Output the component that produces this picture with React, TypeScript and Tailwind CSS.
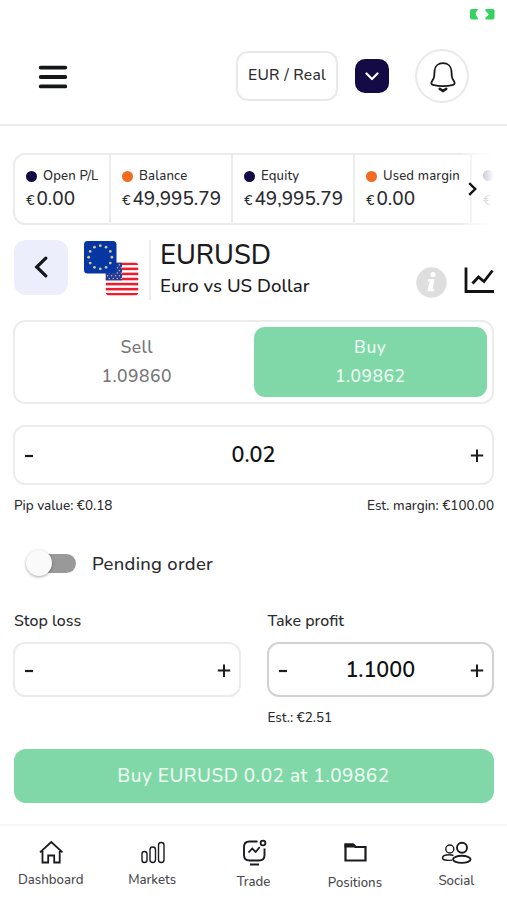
import type { ReactNode } from "react";

const stats = [
  { label: "Open P/L", value: "0.00", dot: "bg-[#140a45]", width: "w-[96px]" },
  { label: "Balance", value: "49,995.79", dot: "bg-[#f26b21]", width: "w-[122px]" },
  { label: "Equity", value: "49,995.79", dot: "bg-[#140a45]", width: "w-[122px]" },
  { label: "Used margin", value: "0.00", dot: "bg-[#f26b21]", width: "w-[117px]" },
];

const euStars = Array.from({ length: 12 }, (_, i) => {
  const a = (i * Math.PI) / 6;
  return { x: 16.25 + Math.sin(a) * 11.6, y: 16.25 - Math.cos(a) * 11.6 };
});

function Flags() {
  return (
    <svg width="55" height="55" viewBox="0 0 55 55" className="mt-px ml-[16px] shrink-0">
      <defs>
        <clipPath id="us">
          <rect x="21.5" y="21.5" width="33" height="33" rx="4" />
        </clipPath>
      </defs>
      <g clipPath="url(#us)">
        <rect x="21.5" y="21.5" width="33" height="33" fill="#fff" />
        {[0, 1, 2, 3, 4, 5, 6].map((i) => (
          <rect key={i} x="21.5" y={21.5 + i * 5.08} width="33" height="2.54" fill="#ee1c2e" />
        ))}
        <rect x="21.5" y="21.5" width="16.5" height="17.8" fill="#273a8f" />
        {[0, 1, 2, 3, 4, 5].map((r) =>
          [0, 1, 2, 3].map((c) => (
            <circle key={`${r}-${c}`} cx={23.5 + c * 4 + (r % 2) * 1.8} cy={24 + r * 2.7} r="0.75" fill="#b4bee8" />
          ))
        )}
      </g>
      <rect width="32.5" height="32.5" rx="3.5" fill="#0636a3" />
      {euStars.map((s, i) => (
        <circle key={i} cx={s.x} cy={s.y} r="1.4" fill="#c9c888" />
      ))}
    </svg>
  );
}

function Stepper({ value, className }: { value?: string; className: string }) {
  return (
    <div className={`flex items-center justify-between rounded-xl border-2 pr-[8px] pl-[10px] ${className}`}>
      <button className="flex w-[14px] justify-start" aria-label="Decrease">
        <svg width="9" height="14" viewBox="0 0 9 14">
          <path d="M0 8H8" stroke="#1c1c20" strokeWidth="2.2" />
        </svg>
      </button>
      <span className="pt-px pr-[2px] text-[21.5px] font-semibold text-[#101012]">{value}</span>
      <button className="flex w-[14px] justify-end" aria-label="Increase">
        <svg width="14" height="14" viewBox="0 0 14 14">
          <path d="M.8 7.600h12.400M7 1.400v12.600" stroke="#1c1c20" strokeWidth="2" />
        </svg>
      </button>
    </div>
  );
}

function NavItem({ label, pad, children }: { label: string; pad: string; children: ReactNode }) {
  return (
    <a className="flex flex-1 flex-col items-center">
      <svg width="32" height="30" viewBox="0 0 32 30" fill="none" stroke="#1b1b1f" strokeWidth="1.8" className="mt-[12px]">
        {children}
      </svg>
      <span className={`text-[13.200px] leading-[18px] font-medium text-[#48484c] ${pad}`}>{label}</span>
    </a>
  );
}

export default function App() {
  return (
    <div className="flex h-[900px] w-[507px] flex-col overflow-hidden bg-white font-['Nunito','Noto_Sans',sans-serif] font-medium text-[#2c2c30]">
      <header className="flex h-[126px] shrink-0 flex-col border-b-2 border-[#ececec]">
        <div className="flex h-[28px] justify-end pt-[9px] pr-[12px]">
          <svg width="25" height="11" viewBox="0 0 25 11" fill="#34d35f">
            <path d="M2 0H8.500L5.500 4 6.500 7 8.500 10.400H2Q0 10.400 0 8.400V2Q0 0 2 0Z" />
            <path d="M15.500 0H22.500Q24.500 0 24.500 2V8.400q0 2-2 2H15.500V8.500L19 5.500 15.500 2Z" />
          </svg>
        </div>
        <div className="flex h-[97px] items-center px-[38px]">
          <svg width="30" height="26" viewBox="0 0 30 26" stroke="#141718" strokeWidth="3.8" strokeLinecap="round" className="mt-[3px]">
            <path d="M2.700 3.600h24.600M2.700 13h24.600M2.700 22.400h24.600" />
          </svg>
          <div className="ml-auto flex h-[50px] w-[102px] items-center justify-center rounded-xl border-2 border-[#e9e9eb] text-[15.600px] tracking-[0.25px] whitespace-nowrap">
            EUR / Real
          </div>
          <button className="ml-[17px] flex h-[34px] w-[34px] items-center justify-center rounded-[10px] bg-[#140a45]" aria-label="Accounts">
            <svg width="14" height="9" viewBox="0 0 14 9" fill="none" stroke="#fff" strokeWidth="2.200" strokeLinecap="round" strokeLinejoin="round" className="mt-[2px]">
              <path d="M1.500 1.500 7 7l5.500-5.500" />
            </svg>
          </button>
          <button className="ml-[26px] flex h-[54px] w-[54px] items-center justify-center rounded-full border-2 border-[#e9e9eb]" aria-label="Notifications">
            <svg width="28" height="32" viewBox="0 0 28 32" fill="none" stroke="#1a1a1d" strokeWidth="1.800" strokeLinecap="round" strokeLinejoin="round" className="mt-[2px] ml-px">
              <path d="M14 2.200C9 2.200 6 5.500 5.600 9.500L5.200 15c-.2 2.600-1.100 3.700-2.300 5.400-1 1.600-.6 3 .9 3.400 6.500 1.600 13.900 1.600 20.400 0 1.500-.4 1.900-1.800.9-3.400-1.200-1.700-2.100-2.800-2.300-5.400l-.4-5.500C22 5.500 19 2.200 14 2.200Z" />
              <path d="M10.800 27.800 14 30l3.200-2.200" strokeWidth="2.700" />
            </svg>
          </button>
        </div>
      </header>

      <main className="flex flex-1 flex-col px-[13px]">
        <div className="relative mt-[27px] h-[72px] shrink-0 overflow-hidden">
          <div className="flex h-full w-[530px] rounded-xl border-2 border-[#ececec]">
            {stats.map((s) => (
              <div key={s.label} className={`flex shrink-0 flex-col border-r-2 border-[#ececec] pt-[11px] pl-[11px] ${s.width}`}>
                <div className="flex h-[20px] items-center gap-[6px]">
                  <span className={`h-[11px] w-[11px] shrink-0 rounded-full ${s.dot}`} />
                  <span className="pt-px text-[13.100px] tracking-[0.150px] whitespace-nowrap">{s.label}</span>
                </div>
                <div className="flex h-[27px] items-baseline gap-[2px] leading-[27px]">
                  <span className="text-[14px]">€</span>
                  <span className="text-[19px]">{s.value}</span>
                </div>
              </div>
            ))}
            <div className="pt-[15px] pl-[11px]">
              <div className="h-[11px] w-[11px] rounded-full bg-[#140a45]" />
              <div className="mt-[6px] text-[14px] leading-[27px]">€</div>
            </div>
          </div>
          {/* fade over the scrolled-off part */}
          <div className="absolute inset-y-0 right-0 w-[32px] bg-linear-to-r from-white/20 via-white/75 via-60% to-white" />
          <svg width="9" height="14" viewBox="0 0 9 14" fill="none" stroke="#131316" strokeWidth="2.400" className="absolute top-[29px] right-[17px]">
            <path d="m1.200 1.200 6 5.800-6 5.800" />
          </svg>
        </div>

        <section className="mt-[15px] flex h-[60px] shrink-0 items-start">
          <button className="ml-px flex h-[55px] w-[54px] shrink-0 items-center justify-center rounded-xl bg-[#eceefb]" aria-label="Back">
            <svg width="14" height="22" viewBox="0 0 14 22" fill="none" stroke="#15151c" strokeWidth="3.200" strokeLinecap="round" className="mr-px mb-px">
              <path d="M11.800 2.200 2.700 11l9.100 8.800" />
            </svg>
          </button>
          <Flags />
          <div className="ml-[10px] h-[60px] w-[2px] bg-[#ececec]" />
          <div className="ml-[9px] whitespace-nowrap text-[#1b1b1e]">
            <h1 className="text-[27.200px] leading-[32px]">EURUSD</h1>
            <p className="pt-px text-[18.700px] leading-[27px]">Euro vs US Dollar</p>
          </div>
          <svg width="31" height="31" viewBox="0 0 31 31" className="mt-[27px] ml-auto">
            <circle cx="15.500" cy="15.500" r="15.200" fill="#dedede" />
            <circle cx="17" cy="7.500" r="2.500" fill="#fff" />
            <path d="M12 12.200h6.500l-2 9.800h2l-.5 2.300h-6.500l2-9.800h-2Z" fill="#fff" />
          </svg>
          <svg width="31" height="27" viewBox="0 0 31 27" fill="none" stroke="#131316" strokeWidth="2.800" className="mt-[27px] -mr-px ml-[17px]">
            <path d="M2 .5v24H30" />
            <path d="m8.500 16.500 6-6.500 5.500 4.500L28.500 3.500" />
          </svg>
        </section>

        <div className="mt-[20px] flex h-[84px] shrink-0 items-stretch rounded-xl border-2 border-[#ececec] p-[5px] text-[17.500px] leading-[29px] tracking-[0.5px]">
          <button className="flex-1 pb-px text-[#747476]">
            <div>Sell</div>
            <div>1.09860</div>
          </button>
          <button className="flex-1 rounded-[11px] bg-[#80d8a9] pb-px text-[#eefcf1]">
            <div>Buy</div>
            <div>1.09862</div>
          </button>
        </div>

        <Stepper value="0.02" className="mt-[21px] h-[60px] shrink-0 border-[#ececec]" />
        <div className="mt-[11px] flex justify-between pl-px text-[13.500px] leading-[20px]">
          <span>Pip value: €0.18</span>
          <span>Est. margin: €100.00</span>
        </div>

        <label className="mt-[33px] flex h-[28px] items-center">
          <span className="relative ml-[17px] h-[19px] w-[46px] rounded-full bg-[#999]">
            <span className="absolute -top-[4px] -left-[4px] h-[26px] w-[26px] rounded-full bg-[#fafafa] shadow-[0_1px_3px_rgba(0,0,0,0.35)]" />
          </span>
          <span className="ml-[16px] pt-px text-[18.400px] tracking-[0.3px]">Pending order</span>
        </label>

        <div className="mt-[33px] grid grid-cols-2 gap-x-[26px]">
          <div>
            <div className="pl-px text-[16px] leading-[22px]">Stop loss</div>
            <Stepper className="mt-[10px] h-[55px] border-[#ececec]" />
          </div>
          <div>
            <div className="pl-px text-[16px] leading-[22px]">Take profit</div>
            <Stepper value="1.1000" className="mt-[10px] h-[55px] border-[#d2d2d2]" />
            <div className="mt-[11px] pl-px text-[13.500px] leading-[20px]">Est.: €2.51</div>
          </div>
        </div>

        <button className="ml-px mt-[21px] h-[54px] shrink-0 rounded-xl bg-[#80d8a9] pt-px pr-px text-[19px] tracking-[0.500px] text-[#eefcf1]">
          Buy EURUSD 0.02 at 1.09862
        </button>
      </main>

      <nav className="flex h-[76px] shrink-0 border-t-2 border-[#f6f6f6]">
        <NavItem label="Dashboard" pad="pt-[3px]">
          <path d="M5 14.300 16.300 4l11.200 10.300M7.500 13v11.500h5.700V17.500h6v7h5.500V13" />
        </NavItem>
        <NavItem label="Markets" pad="pt-[3px]">
          <rect x="6" y="13.500" width="5" height="11" rx="2.500" strokeWidth="1.400" />
          <rect x="14" y="9" width="5.500" height="15.500" rx="2.700" strokeWidth="1.400" />
          <rect x="22.500" y="4.500" width="5.500" height="20" rx="2.700" strokeWidth="1.400" />
        </NavItem>
        <NavItem label="Trade" pad="pt-[5px]">
          <path d="M19.500 3.500H11.500Q6 3.500 6 9V17q0 5.500 5.500 5.500H21q5.500 0 5.500-5.500V10.500M12 26.500h9" strokeWidth="1.900" />
          <circle cx="25" cy="5" r="2.400" />
          <path d="m10.500 14.500 3.700-4 3.500 3.500 4-5" />
        </NavItem>
        <NavItem label="Positions" pad="pt-[6px]">
          <path d="M6.500 8v14.500h20V9H16.500L14.500 6.500H6.500Z" strokeWidth="2.200" />
          <path d="M5.500 5.500h8.700l2.300 4H5.500Z" fill="#1b1b1f" stroke="none" />
        </NavItem>
        <NavItem label="Social" pad="pt-[4px]">
          <circle cx="9.800" cy="11" r="4" strokeWidth="1.400" />
          <circle cx="22" cy="9.800" r="5" strokeWidth="1.900" />
          <path d="M13.500 17.500c-4.500-1.500-11-.5-11 2.400 0 2.200 4.500 2.800 9.500 2.200" strokeWidth="1.400" />
          <ellipse cx="21.800" cy="21.300" rx="8.800" ry="3.600" strokeWidth="1.900" />
        </NavItem>
      </nav>
    </div>
  );
}
